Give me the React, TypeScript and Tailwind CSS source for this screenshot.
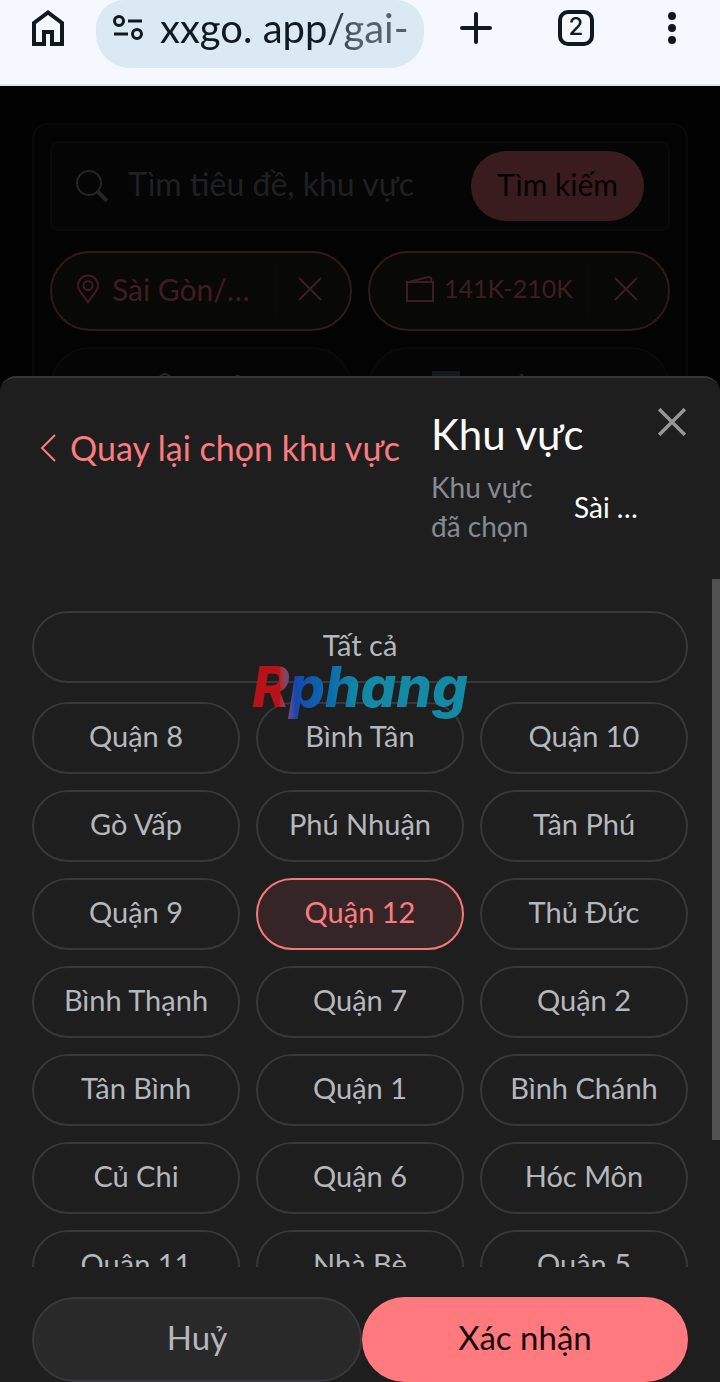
import { useState } from "react";

const DISTRICTS = [
  "Quận 8", "Bình Tân", "Quận 10",
  "Gò Vấp", "Phú Nhuận", "Tân Phú",
  "Quận 9", "Quận 12", "Thủ Đức",
  "Bình Thạnh", "Quận 7", "Quận 2",
  "Tân Bình", "Quận 1", "Bình Chánh",
  "Củ Chi", "Quận 6", "Hóc Môn",
  "Quận 11", "Nhà Bè", "Quận 5",
];

function CrossIcon({ className, width = 1 }: { className: string; width?: number }) {
  return (
    <svg viewBox="0 0 24 24" className={className} fill="none" stroke="currentColor" strokeWidth={width}>
      <path d="M1 1 23 23M23 1 1 23" />
    </svg>
  );
}

function BrowserBar() {
  return (
    <header className="flex h-[86px] shrink-0 items-start border-b-2 border-[#dde5ea] bg-[#f5f8fe] text-[#10191f]">
      <button type="button" aria-label="Home" className="ml-8 mt-[10px]">
        <svg viewBox="0 0 32 36" className="h-9 w-8" fill="none" stroke="currentColor" strokeWidth="4">
          <path d="M2 34V13L16 2.500 30 13V34H20V22H12V34Z" />
        </svg>
      </button>
      <div className="ml-8 flex h-[68px] min-w-0 flex-1 items-start rounded-b-[34px] rounded-t-[28px] bg-[#dbe9f2] pl-4 pt-1">
        <svg viewBox="0 0 32 26" className="mt-[11px] h-[26px] w-8 shrink-0" fill="none" stroke="currentColor" strokeWidth="3">
          <circle cx="7" cy="6" r="4.500" />
          <circle cx="25" cy="19" r="4.500" />
          <path d="M16 6H30M2 19H16" />
        </svg>
        <input
          aria-label="Address"
          readOnly
          value="xxgo. app/gai-"
          className="ml-4 h-12 w-full min-w-0 bg-linear-to-r from-[#10191f] from-60% to-[#55626a] to-75% bg-clip-text text-[40px] leading-12 text-transparent outline-none"
        />
      </div>
      <div className="flex w-[296px] shrink-0 items-center pl-9 pt-[10px]">
        <button type="button" aria-label="New tab">
          <svg viewBox="0 0 32 32" className="size-8" fill="none" stroke="currentColor" strokeWidth="4" strokeLinecap="round">
            <path d="M16 2V30M2 16H30" />
          </svg>
        </button>
        <button type="button" className="ml-[66px] flex size-9 items-center justify-center rounded-[10px] border-4 border-current pb-0.5 font-[Inter,sans-serif] text-2xl font-medium">
          2
        </button>
        <button type="button" aria-label="Menu" className="ml-[74px]">
          <svg viewBox="0 0 8 32" className="h-8 w-2" fill="currentColor">
            <circle cx="4" cy="4" r="4" />
            <circle cx="4" cy="16" r="4" />
            <circle cx="4" cy="28" r="4" />
          </svg>
        </button>
      </div>
    </header>
  );
}

function DimmedPage() {
  return (
    <section className="h-[290px] shrink-0 overflow-hidden bg-[#020202] px-8 pt-[37px] text-[30px]">
      <div className="rounded-2xl border-2 border-[#090909] bg-[#030303] p-4 pb-10">
        <div className="flex h-[90px] items-center rounded-lg border-2 border-[#090909] bg-[#050505] px-6">
          <svg viewBox="0 0 32 32" className="size-8 shrink-0 text-[#252525]" fill="none" stroke="currentColor" strokeWidth="2">
            <circle cx="13" cy="13" r="12" />
            <path d="m22 22 9 9" strokeWidth="4" />
          </svg>
          <input
            aria-label="Tìm kiếm"
            placeholder="Tìm tiêu đề, khu vực"
            className="ml-5 min-w-0 flex-1 bg-transparent pb-1 text-[32px] placeholder:text-[#1f2022]"
          />
          <button type="button" className="h-[70px] w-[173px] shrink-0 rounded-full bg-[#3b1c1e] pb-1 text-[#050102]">
            Tìm kiếm
          </button>
        </div>
        <div className="mt-5 grid grid-cols-2 gap-4 text-[#3e1d20]">
          <div className="flex h-20 items-center rounded-full border-2 border-[#32191c] bg-[#080805] pb-1 pl-6">
            <svg viewBox="0 0 24 30" className="h-[30px] w-6 shrink-0" fill="none" stroke="currentColor" strokeWidth="2">
              <path d="M12 28C9 23 2 17 2 11.500a10 10 0 0 1 20 0C22 17 15 23 12 28Z" />
              <circle cx="12" cy="11.500" r="4.500" />
            </svg>
            <span className="ml-3 min-w-0 flex-1 whitespace-nowrap">Sài Gòn/…</span>
            <button type="button" aria-label="Xoá khu vực" className="flex h-14 w-[74px] shrink-0 items-center border-l-2 border-[#0a0a09] pl-5">
              <CrossIcon className="size-6" width={2} />
            </button>
          </div>
          <div className="flex h-20 items-center rounded-full border-2 border-[#32191c] bg-[#080805] pb-1 pl-9">
            <svg viewBox="0 0 28 28" className="size-7 shrink-0" fill="none" stroke="currentColor" strokeWidth="2">
              <path d="M1 7H27V26H1ZM3 7 22 2 25 3 26 7" />
            </svg>
            <span className="ml-2.5 min-w-0 flex-1 whitespace-nowrap text-[25px]">141K-210K</span>
            <button type="button" aria-label="Xoá giá" className="flex h-14 w-20 shrink-0 items-center border-l-2 border-[#0a0a09] pl-6">
              <CrossIcon className="size-6" width={2} />
            </button>
          </div>
          <button type="button" className="flex h-20 items-start justify-center gap-4 rounded-full border-2 border-[#0a0a0a] bg-[#050505] pt-6 leading-8 text-[#252525]">
            <svg viewBox="0 0 24 24" className="size-6" fill="none" stroke="currentColor" strokeWidth="2">
              <circle cx="12" cy="7" r="6" />
              <path d="M2 24a10 10 0 0 1 20 0" />
            </svg>
            Tuổi
          </button>
          <button type="button" className="flex h-20 items-start justify-center gap-4 rounded-full border-2 border-[#0a0a0a] bg-[#050505] pt-[22px] leading-8 text-[#252525]">
            <svg viewBox="0 0 28 28" className="size-7" fill="#14191c">
              <path d="M0 0H28V28H0Z" />
            </svg>
            Chiều cao
          </button>
        </div>
      </div>
    </section>
  );
}

export default function App() {
  const [selected, setSelected] = useState("Quận 12");

  const pill = "h-[72px] rounded-full border-2 pb-1 text-[29px] ";

  return (
    <main className="flex h-screen flex-col overflow-hidden bg-black font-[Lato,sans-serif]">
      <BrowserBar />
      <DimmedPage />

      <div role="dialog" aria-label="Khu vực" className="flex min-h-0 flex-1 flex-col rounded-t-2xl border-t-2 border-[#353535] bg-[#1e1e1e]">
        <div className="flex h-[201px] shrink-0 items-start pl-10 pr-[34px]">
          <button type="button" className="mt-[46px] flex items-center gap-3.5 whitespace-nowrap text-[34px] leading-12 text-[#fb7b7f]">
            <svg viewBox="0 0 16 28" className="h-7 w-4" fill="none" stroke="currentColor" strokeWidth="2">
              <path d="M15 1 2 14 15 27" />
            </svg>
            Quay lại chọn khu vực
          </button>
          <div className="ml-auto w-[208px] shrink-0 pt-[30px]">
            <h2 className="text-[42px] leading-[52px] text-[#fafafa]">Khu vực</h2>
            <div className="mt-2 flex items-center gap-10 text-[28px]">
              <p className="w-[103px] shrink-0 leading-[39px] text-[#848a92]">Khu vực đã chọn</p>
              <span className="whitespace-nowrap text-white">Sài …</span>
            </div>
          </div>
          <button type="button" aria-label="Đóng" className="ml-[19px] mt-[30px] text-[#969696]">
            <CrossIcon className="size-7" width={3} />
          </button>
        </div>

        <div className="relative min-h-0 flex-1 overflow-hidden px-8 pt-8">
          <button type="button" className={pill + "mb-[19px] w-full border-[#37373c] text-[#b4b8bd]"}>
            Tất cả
          </button>
          <div className="grid grid-cols-3 gap-4">
            {DISTRICTS.map((name) => (
              <button
                key={name}
                type="button"
                aria-pressed={name === selected}
                onClick={() => setSelected(name)}
                className={
                  pill +
                  (name === selected
                    ? "border-[#f7777b] bg-[#352527] text-[#fb7b7f]"
                    : "border-[#37373c] text-[#b4b8bd]")
                }
              >
                {name}
              </button>
            ))}
          </div>
          <div className="pointer-events-none absolute inset-x-0 top-[74px] flex justify-center">
            <span className="bg-linear-to-r from-[#b81218] from-14% via-[#1746b0] via-21% to-[#1489a5] to-50% bg-clip-text px-1 font-[Inter,sans-serif] text-[56px] leading-[68px] font-extrabold italic text-transparent">
              Rphang
            </span>
          </div>
          <div className="absolute right-0 top-0 h-[561px] w-2 bg-[#515151]" />
        </div>

        <div className="flex shrink-0 px-8 pt-[30px] text-[33px]">
          <button type="button" className="h-[85px] flex-1 rounded-full border-2 border-[#38383d] bg-[#29292a] pb-1 text-[#b4b8bd]">
            Huỷ
          </button>
          <button type="button" className="h-[85px] flex-1 rounded-full bg-[#ff7a7e] pb-1 text-[#1b0708]">
            Xác nhận
          </button>
        </div>
      </div>
    </main>
  );
}
